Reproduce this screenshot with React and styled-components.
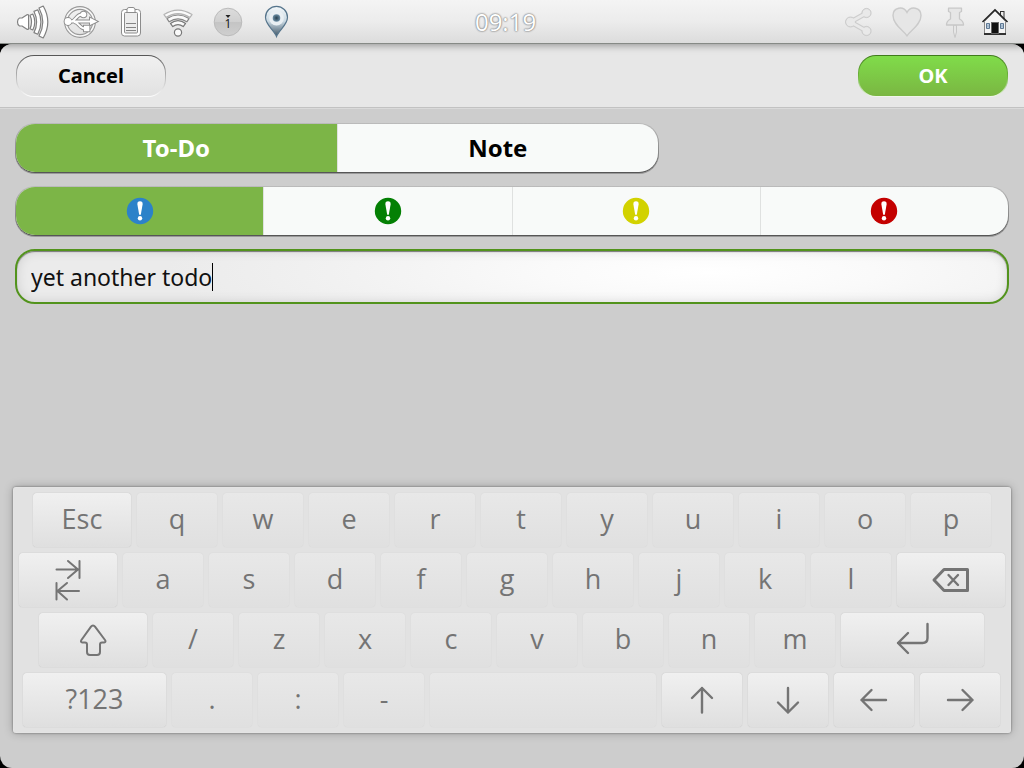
import React, { useState } from "react";
import styled, { createGlobalStyle, css } from "styled-components";

const GlobalStyle = createGlobalStyle`
  * { box-sizing: border-box; }
  body {
    margin: 0;
    background: #000;
    font-family: "Open Sans", "Noto Sans", sans-serif;
  }
`;

const Page = styled.div`
  min-height: 100vh;
  display: flex;
  flex-direction: column;
`;

const StatusBar = styled.header`
  position: relative;
  height: 44px;
  padding: 0 13px 0 16px;
  display: flex;
  align-items: center;
  justify-content: space-between;
  background: linear-gradient(#f4f4f4, #ececec 50%, #dcdcdc);
  border-bottom: 1px solid #868a86;
  box-shadow: 0 1px 8px rgba(0, 0, 0, 0.4);
`;

const IconGroup = styled.div`
  display: flex;
  gap: ${(p) => p.$gap}px;
`;

const StatusSide = styled.div`
  flex: 1 1 0;
  display: flex;
  justify-content: ${(p) => (p.$end ? "flex-end" : "flex-start")};
`;

const StatusIcon = styled.svg`
  display: block;
  width: 32px;
  height: 43px;
  overflow: visible;
`;

const Clock = styled.time`
  padding-right: 16px;
  font-size: 24px;
  line-height: 42px;
  color: #fff;
  text-shadow: 0 0 1px #888, 0 0 2px #888, 0 0 2px #999;
`;

const Sheet = styled.main`
  flex: 1;
  display: flex;
  flex-direction: column;
  border-radius: 12px;
  overflow: hidden;
  background: #cdcdcd;
`;

const DialogBar = styled.div`
  display: flex;
  justify-content: space-between;
  padding: 11px 16px 10px;
  background: #e7e7e7;
  border-bottom: 1px solid #c2c2c2;
  box-shadow: 0 1px 0 #dadada;
`;

const DialogButton = styled.button`
  width: 150px;
  height: 42px;
  padding: 0;
  border: 1px solid transparent;
  border-radius: 18px;
  font: bold 20px/24px "Noto Sans", sans-serif;
  ${(p) =>
    p.$primary
      ? css`
          color: #fff;
          background: linear-gradient(#80dc4a, #7ab642) padding-box,
            linear-gradient(#3f7a1c, #6fb53c 50%, #f2f7ee) border-box;
        `
      : css`
          color: #000;
          background: linear-gradient(#f1f1f1, #e1e1e1) padding-box,
            linear-gradient(#555, #b5b5b5 50%, #fff) border-box;
        `}
`;

const Form = styled.div`
  display: flex;
  flex-direction: column;
  gap: 13px;
  padding: 15px 15px 0;
`;

const Segmented = styled.div`
  display: flex;
  width: ${(p) => p.$width};
  height: 50px;
  border: 1px solid transparent;
  border-radius: 20px;
  background: linear-gradient(#f8faf9, #f8faf9) padding-box,
    linear-gradient(#bbb, #888 60%, #555) border-box;
  box-shadow: 0 1px 0 #999;
`;

const Segment = styled.label`
  position: relative;
  flex: 1 1 0;
  display: flex;
  align-items: center;
  justify-content: center;
  font: bold 24px/32px "Noto Sans", sans-serif;
  color: #000;
  border-left: 1px solid #dfe1e0;
  cursor: pointer;

  &:first-child {
    border-left: 0;
    border-radius: 19px 0 0 19px;
  }
  &:last-child {
    border-radius: 0 19px 19px 0;
  }
  &:has(input:checked) {
    background: #7cb547;
    color: #fff;
  }
  input {
    position: absolute;
    opacity: 0;
    margin: 0;
  }
`;

const Priority = styled.svg`
  width: 28px;
  height: 28px;
  fill: #fff;
`;

const TextField = styled.div`
  display: flex;
  align-items: center;
  height: 55px;
  padding: 0 14px;
  border: 2px solid #52931c;
  border-radius: 20px;
  box-shadow: inset 0 1px 1px #777, inset 0 0 12px rgba(0, 0, 0, 0.12);
  background: radial-gradient(ellipse 55% 160% at 70% 42%, #fff, #fafafa 30%, #f1f1f1 70%, #ebebeb);
`;

const TextInput = styled.input`
  field-sizing: content;
  min-width: 0;
  padding: 0;
  border: 0;
  outline: 0;
  background: none;
  color: #111;
  caret-color: transparent;
  font: 23px/32px "Noto Sans", sans-serif;
`;

const Caret = styled.span`
  width: 1px;
  height: 28px;
  background: #000;
`;

const Keyboard = styled.section`
  display: flex;
  flex-direction: column;
  gap: 6px;
  margin: auto 13px 35px;
  padding: 6px 0;
  border-radius: 3px;
  background: #e2e2e2;
  box-shadow: 0 0 2px rgba(0, 0, 0, 0.5), 0 0 10px rgba(0, 0, 0, 0.25), inset 0 0 1px #fff;
`;

const KeyRow = styled.div`
  display: flex;
  gap: 6px;
  padding: 0 ${(p) => p.$right}px 0 ${(p) => p.$left}px;
`;

const Key = styled.button`
  flex: ${(p) => p.$size} 1 0;
  min-width: 0;
  height: 54px;
  padding: 0 0 2px;
  display: flex;
  align-items: center;
  justify-content: center;
  border: 0;
  border-radius: 4px;
  font: 27px/36px "Open Sans", "Noto Sans", sans-serif;
  color: #747474;
  background: ${(p) =>
    p.$special ? "linear-gradient(#f0f0f0, #dfdfdf)" : "linear-gradient(#e8e8e8, #e0e0e0)"};
  box-shadow: 0 0 1px ${(p) => (p.$special ? "#aaa" : "#c8c8c8")};
`;

const KeyIcon = styled.svg`
  width: 40px;
  height: 44px;
  fill: none;
  stroke: #747474;
  stroke-width: 2;
  stroke-linecap: round;
  stroke-linejoin: round;
`;

const VolumeIcon = () => (
  <StatusIcon viewBox="0 0 32 43" role="img" aria-label="Volume">
    <g fill="#fff" stroke="#808080" strokeWidth="1.2" strokeLinejoin="round">
      <path d="M6 18 L11 14.8 Q12.6 14.2 12.6 15.8 V28.2 Q12.6 29.8 11 29.2 L6 26 H3.5 Q1.5 25 1.5 22 Q1.5 19 3.5 18Z" />
      <path d="M14 15.2 L16.8 14 Q20.8 22 16.8 30 L14 28.8 Q17 22 14 15.2Z" />
      <path d="M18 11.4 L21.8 9.8 Q28 22 21.8 34.2 L18 32.6 Q23.2 22 18 11.4Z" />
      <path d="M23 8 L27.2 6 Q36.4 22 27.2 38 L23 36 Q30.6 22 23 8Z" />
    </g>
  </StatusIcon>
);

const UsbIcon = () => (
  <StatusIcon viewBox="0 0 32 43" role="img" aria-label="USB">
    <circle cx="15" cy="22" r="14" fill="none" stroke="#999" strokeWidth="3.8" />
    <circle cx="15" cy="22" r="14" fill="none" stroke="#f8f8f8" strokeWidth="1.6" />
    <g fill="none" stroke="#8e8e8e" strokeWidth="4">
      <path d="M4 21.5H26 M6 21.5 C11 21 11 14.5 17 14.5 M9 22 C14 22 14 28.5 20 28.5" />
      <circle cx="3" cy="21.5" r="2.4" />
      <circle cx="18.5" cy="14.5" r="1.8" />
      <path d="M26 19.5 L30 21.5 L26 23.5Z M20 26.8h3.4v3.4h-3.4z" />
    </g>
    <g fill="#fff" stroke="#fff" strokeWidth="2">
      <path d="M4 21.5H26 M6 21.5 C11 21 11 14.5 17 14.5 M9 22 C14 22 14 28.5 20 28.5" fill="none" />
      <circle cx="3" cy="21.5" r="2.4" />
      <circle cx="18.5" cy="14.5" r="1.8" />
      <path d="M26 19.5 L30 21.5 L26 23.5Z M20 26.8h3.4v3.4h-3.4z" />
    </g>
  </StatusIcon>
);

const BatteryIcon = () => (
  <StatusIcon viewBox="0 0 32 43" role="img" aria-label="Battery">
    <rect x="7.5" y="9.5" width="19" height="26.5" rx="3" fill="#fff" stroke="#8c8c8c" />
    <rect x="10.5" y="12.5" width="13" height="20.5" rx="1" fill="#ececec" stroke="#8c8c8c" />
    <path d="M13 12.5V9.5Q13 7.5 15 7.5H19Q21 7.5 21 9.5V12.5Z" fill="#fff" stroke="#8c8c8c" />
    <path d="M12 23.5H22 M12 27.5H22 M12 30.5H22" stroke="#848484" />
  </StatusIcon>
);

const WifiIcon = () => (
  <StatusIcon viewBox="0 0 32 43" role="img" aria-label="Wi-Fi">
    <g fill="#fafafa" strokeWidth="1.2" strokeLinejoin="round">
      <path d="M1 14.6 Q15 5.8 29 14.6 L27 17.4 Q15 9.8 3 17.4Z" stroke="#b4b4b4" />
      <path d="M4 18.6 Q15 11.4 26 18.6 L23.8 21.8 Q15 16 6.2 21.8Z" stroke="#858585" />
      <path d="M7.4 23.4 Q15 17.8 22.6 23.4 L20.2 26.6 Q15 22.6 9.8 26.6Z" stroke="#787878" />
      <circle cx="15" cy="32.5" r="3.6" stroke="#787878" />
    </g>
  </StatusIcon>
);

const CountIcon = () => (
  <StatusIcon viewBox="0 0 32 43" role="img" aria-label="1 notification">
    <defs>
      <linearGradient id="count" x2="0" y2="1">
        <stop offset="0" stopColor="#dcdcdc" />
        <stop offset="0.5" stopColor="#d0d0d0" />
        <stop offset="0.5" stopColor="#c4c4c4" />
        <stop offset="1" stopColor="#cfcfcf" />
      </linearGradient>
    </defs>
    <circle cx="16" cy="22" r="13.8" fill="url(#count)" stroke="#bbb" />
    <path d="M13.5 15H18.5L16 18Z" fill="#222" />
    <text x="16" y="28" fontSize="12" textAnchor="middle" fontFamily="Open Sans" fill="#111">1</text>
  </StatusIcon>
);

const LocationIcon = () => (
  <StatusIcon viewBox="0 0 32 43" role="img" aria-label="Location">
    <defs>
      <linearGradient id="drop" x2="0" y2="1">
        <stop offset="0" stopColor="#f4f8fa" />
        <stop offset="0.5" stopColor="#c9d8e2" />
        <stop offset="1" stopColor="#3c5263" />
      </linearGradient>
      <radialGradient id="eye">
        <stop offset="0" stopColor="#27404f" />
        <stop offset="1" stopColor="#6d8fa6" />
      </radialGradient>
    </defs>
    <path d="M15.5 36.5 C13 30 4.5 25 4.5 17.3 A11 11 0 0 1 26.5 17.3 C26.5 25 18 30 15.5 36.5Z" fill="url(#drop)" stroke="#56758c" strokeWidth="1.2" />
    <circle cx="15.5" cy="18" r="7.4" fill="#e9eff3" />
    <circle cx="15.5" cy="18" r="3.8" fill="url(#eye)" />
  </StatusIcon>
);

const ShareIcon = () => (
  <StatusIcon viewBox="0 0 32 43" role="img" aria-label="Share">
    <g fill="#cdcdcd" stroke="#cdcdcd">
      <path d="M7.5 22L23.5 13 M7.5 22L23.5 31" strokeWidth="5" />
      <circle cx="7.5" cy="22" r="5" />
      <circle cx="23.5" cy="13" r="4.6" />
      <circle cx="23.5" cy="31" r="4.6" />
    </g>
    <g fill="#e9e9e9" stroke="#e9e9e9">
      <path d="M7.5 22L23.5 13 M7.5 22L23.5 31" strokeWidth="2.8" />
      <circle cx="7.5" cy="22" r="3.9" />
      <circle cx="23.5" cy="13" r="3.5" />
      <circle cx="23.5" cy="31" r="3.5" />
    </g>
  </StatusIcon>
);

const HeartIcon = () => (
  <StatusIcon viewBox="0 0 32 43" role="img" aria-label="Favourite">
    <path d="M16 35.8 C13 31 2 25 2 15.5 C2 7 12.5 5.5 16 12.5 C19.5 5.5 30 7 30 15.5 C30 25 19 31 16 35.8Z" fill="#e6e6e6" stroke="#cacaca" strokeWidth="1.4" />
  </StatusIcon>
);

const PushPinIcon = () => (
  <StatusIcon viewBox="0 0 32 43" role="img" aria-label="Pin">
    <path d="M14.5 25 H17.5 V32 L16 37.5 L14.5 32Z" fill="#e6e6e6" stroke="#c8c8c8" />
    <path d="M9.5 8.2 H22.5 V11.5 L20.5 12.5 V19 Q24.5 21 24.5 25 H7.5 Q7.5 21 11.5 19 V12.5 L9.5 11.5Z" fill="#e6e6e6" stroke="#c8c8c8" strokeWidth="1.3" strokeLinejoin="round" />
  </StatusIcon>
);

const HomeIcon = () => (
  <StatusIcon viewBox="0 0 32 43" role="img" aria-label="Home">
    <rect x="21.5" y="11.5" width="3.5" height="7" fill="#eee" stroke="#333" />
    <path d="M5.5 21.5 L16 11 L26.5 21.5 V34 H5.5Z" fill="#f4f4f4" stroke="#888" />
    <path d="M3.5 22 L16 9.8 L28.5 22" fill="none" stroke="#222" strokeWidth="1.5" />
    <path d="M5 34H27" stroke="#222" strokeWidth="1.8" />
    <rect x="12.5" y="22.5" width="7" height="11" fill="#111" stroke="#666" />
    <path d="M7.5 23.5h3v5h-3z M21.5 23.5h3v5h-3z" fill="#cfe0f0" stroke="#5b7590" />
    <path d="M9 23.5v5M7.5 26h3M23 23.5v5M21.5 26h3" stroke="#8099b0" strokeWidth="0.6" />
  </StatusIcon>
);

const PriorityIcon = ({ color }) => (
  <Priority viewBox="0 0 28 28" aria-hidden="true">
    <circle cx="14" cy="14" r="13.2" fill={color} />
    <path d="M14 4.2 C16 4.2 16.8 5.4 16.6 7.4 L14.8 17.8 H13.2 L11.4 7.4 C11.2 5.4 12 4.2 14 4.2Z" />
    <circle cx="14" cy="21.2" r="2.2" />
  </Priority>
);

const keyIcons = {
  Tab: <path d="M8.5 12.5H30 M20 4L30 12.5L20 21 M31.5 4V21 M31 34H10 M19 26L9.5 34L19 42.5 M8.5 26V42.5" />,
  Shift: (
    <path d="M20 8.5 Q21.2 8.5 22 9.6 L32 23 Q33.4 25 31 25.5 H29 Q27 25.5 27 27.5 V35 Q27 38 24 38 H17 Q14 38 14 35 V27.5 Q14 25.5 12 25.5 H9.5 Q7 25 8.4 23 L18 9.6 Q18.8 8.5 20 8.5Z" />
  ),
  Backspace: (
    <>
      <path d="M13 12.5H36.5V33.5H13L3 23Z" strokeWidth="3" />
      <path d="M17.5 18L27 28 M27 18L17.5 28" strokeWidth="2.4" />
    </>
  ),
  Enter: <path d="M34.5 7V21 Q34.5 26 29.5 26H5 M15 16L5 26L15 36" strokeWidth="2.4" />,
  Up: <path d="M20 35.5V11 M10 21L20 11L30 21" strokeWidth="2.4" />,
  Down: <path d="M20 11V35.5 M10 25.5L20 35.5L30 25.5" strokeWidth="2.4" />,
  Left: <path d="M32 23H7.5 M17.5 13L7.5 23L17.5 33" strokeWidth="2.4" />,
  Right: <path d="M8 23H32.5 M22.5 13L32.5 23L22.5 33" strokeWidth="2.4" />,
};

const letters = (chars) => chars.split("").map((label) => ({ label, size: 80 }));
const special = (label, size) => ({ label, size, special: true });

const rows = [
  { left: 20, right: 20, keys: [special("Esc", 98), ...letters("qwertyuiop")] },
  { left: 6, right: 6, keys: [special("Tab", 98), ...letters("asdfghjkl"), special("Backspace", 108)] },
  { left: 26, right: 27, keys: [special("Shift", 108), ...letters("/zxcvbnm"), special("Enter", 143)] },
  {
    left: 10,
    right: 11,
    keys: [
      special("?123", 143),
      ...letters(".:-"),
      { label: "Space", size: 226, blank: true },
      special("Up", 80),
      special("Down", 80),
      special("Left", 80),
      special("Right", 80),
    ],
  },
];

const priorities = [
  { name: "Low", color: "#2c82c9" },
  { name: "Normal", color: "#048004" },
  { name: "High", color: "#d2d200" },
  { name: "Urgent", color: "#c40000" },
];

export default function App() {
  const [kind, setKind] = useState("To-Do");
  const [priority, setPriority] = useState("Low");
  const [text, setText] = useState("yet another todo");

  return (
    <Page>
      <GlobalStyle />
      <StatusBar>
        <StatusSide>
          <IconGroup $gap={17}>
            <VolumeIcon />
            <UsbIcon />
            <BatteryIcon />
            <WifiIcon />
            <CountIcon />
            <LocationIcon />
          </IconGroup>
        </StatusSide>
        <Clock>09:19</Clock>
        <StatusSide $end>
          <IconGroup $gap={8}>
            <IconGroup $gap={16}>
              <ShareIcon />
              <HeartIcon />
              <PushPinIcon />
            </IconGroup>
            <HomeIcon />
          </IconGroup>
        </StatusSide>
      </StatusBar>
      <Sheet>
        <DialogBar>
          <DialogButton type="button">Cancel</DialogButton>
          <DialogButton type="button" $primary>OK</DialogButton>
        </DialogBar>
        <Form>
          <Segmented $width="calc(65% - 2px)" role="radiogroup" aria-label="Type">
            {["To-Do", "Note"].map((name) => (
              <Segment key={name}>
                <input type="radio" name="kind" checked={kind === name} onChange={() => setKind(name)} />
                {name}
              </Segment>
            ))}
          </Segmented>
          <Segmented $width="100%" role="radiogroup" aria-label="Priority">
            {priorities.map(({ name, color }) => (
              <Segment key={name}>
                <input
                  type="radio"
                  name="priority"
                  aria-label={name}
                  checked={priority === name}
                  onChange={() => setPriority(name)}
                />
                <PriorityIcon color={color} />
              </Segment>
            ))}
          </Segmented>
          <TextField>
            <TextInput aria-label="Text" value={text} onChange={(e) => setText(e.target.value)} />
            <Caret />
          </TextField>
        </Form>
        <Keyboard aria-label="Keyboard">
          {rows.map((row, i) => (
            <KeyRow key={i} $left={row.left} $right={row.right}>
              {row.keys.map(({ label, size, special: isSpecial, blank }) => (
                <Key
                  key={label}
                  type="button"
                  $size={size}
                  $special={isSpecial}
                  aria-label={keyIcons[label] || blank ? label : undefined}
                >
                  {keyIcons[label] ? (
                    <KeyIcon viewBox="0 0 40 44" aria-hidden="true">{keyIcons[label]}</KeyIcon>
                  ) : blank ? null : (
                    label
                  )}
                </Key>
              ))}
            </KeyRow>
          ))}
        </Keyboard>
      </Sheet>
    </Page>
  );
}
